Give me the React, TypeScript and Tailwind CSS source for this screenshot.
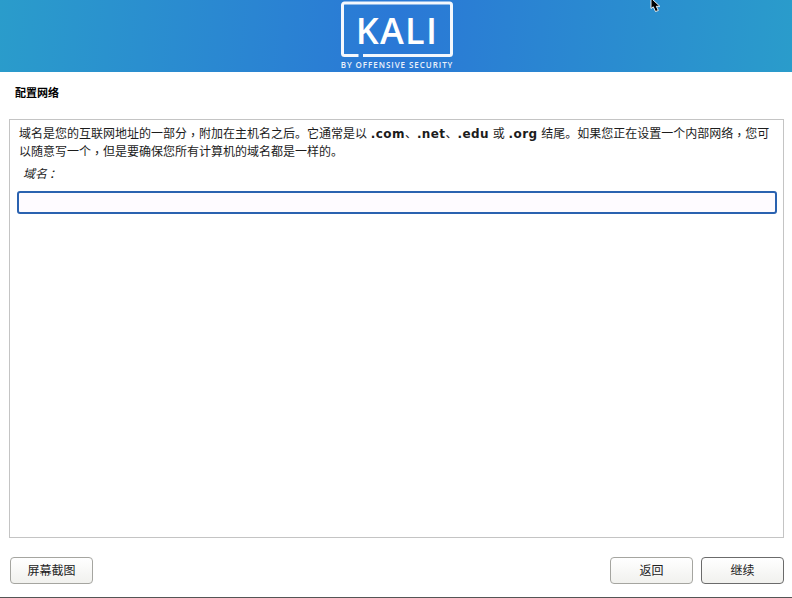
const cjk = "font-['DejaVu_Sans','Noto_Sans_CJK_SC',sans-serif]";

function Logo() {
  return (
    <svg width="114" height="72" viewBox="0 0 114 72" className="block">
      <path d="M19.500 55.500H5.500a2 2 0 0 1-2-2V5a2 2 0 0 1 2-2h105a2 2 0 0 1 2 2v48.500a2 2 0 0 1-2 2H24" fill="none" stroke="#f4f8fd" strokeWidth="3" />
      <text x="58" y="43.500" textAnchor="middle" fill="#fff" fontSize="36" fontWeight="600" fontFamily="'Open Sans', sans-serif" letterSpacing="1.3">KALI</text>
      <text x="58" y="68" textAnchor="middle" fill="#eaf1fa" fontSize="8" fontWeight="600" fontFamily="'Open Sans', sans-serif" letterSpacing="0.95">BY OFFENSIVE SECURITY</text>
    </svg>
  );
}

function Cursor() {
  return (
    <svg width="13" height="13" viewBox="0 0 13 13" className="absolute left-[650px] top-0">
      <path d="M1 -1V8.500L3.300 6.800L5.500 11.500L8.300 10.500L6.300 6.300H9.800L2 -1Z" fill="#000" stroke="#fff" strokeWidth="0.9" />
    </svg>
  );
}

function Btn({ label, dark }: { label: string; dark?: boolean }) {
  return (
    <button className={`w-[83px] h-[27px] rounded-[4px] border bg-gradient-to-b from-white to-[#f1f1ee] text-[12px] leading-none text-[#222] ${dark ? "border-[#6b6b6b]" : "border-[#a5a5a0]"}`}>
      {label}
    </button>
  );
}

function Comma() {
  return <span className="font-['Noto_Sans_CJK_TC',sans-serif] align-[-2px] leading-[0]">，</span>;
}

function Code({ children }: { children: string }) {
  return <b className="font-bold tracking-[0.4px]">{children}</b>;
}

export default function App() {
  return (
    <div className={`relative w-[792px] h-[598px] bg-white flex flex-col overflow-hidden ${cjk}`}>
      <header className="h-[72px] flex justify-center bg-[linear-gradient(95deg,#2a9ccb_0%,#2a78d6_50%,#2a9ccb_100%)]">
        <Logo />
      </header>
      <Cursor />
      <h1 className="h-[47px] pl-[15px] pt-[15px] text-[11px] leading-[14px] font-bold text-black">配置网络</h1>
      <main className="ml-[9px] mr-[8px] h-[419px] border border-[#c4c4c4] pl-[7px] pt-[5px]">
        <p className="text-[12px] leading-[18px] text-[#1c1c1c] ml-[2px] w-[755px]">
          域名是您的互联网地址的一部分<Comma />附加在主机名之后。它通常是以 <Code>.com</Code>、<Code>.net</Code>、<Code>.edu</Code> 或 <Code>.org</Code> 结尾。如果您正在设置一个内部网络<Comma />您可<wbr />以随意写一个<Comma />但是要确保您所有计算机的域名都是一样的。
        </p>
        <label className="block mt-[4px] ml-[6px] text-[12px] leading-[18px] italic text-[#222]">域名<span className="ml-[2px]">：</span></label>
        <input className="block mt-[8px] w-[760px] h-[23px] rounded-[3px] border-2 border-[#2a62b0] bg-[#fefbff] outline-none" />
      </main>
      <footer className="flex-1 flex items-start justify-between pl-[10px] pr-[8px] pt-[19px] border-b border-[#555]">
        <Btn label="屏幕截图" />
        <div className="flex gap-[8px]">
          <Btn label="返回" />
          <Btn label="继续" dark />
        </div>
      </footer>
    </div>
  );
}
